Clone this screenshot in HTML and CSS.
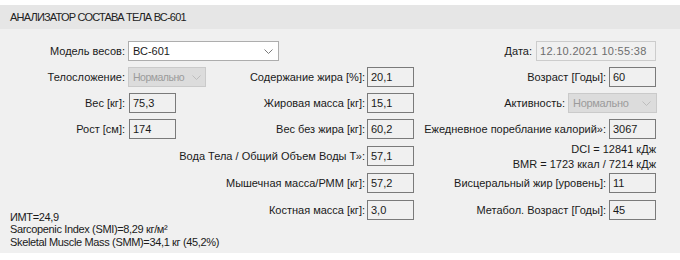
FILE: index.html
```html
<!DOCTYPE html>
<html lang="ru">
<head>
<meta charset="utf-8">
<link rel="stylesheet" href="styles.css">
</head>
<body>
<div class="window">
  <div class="title">АНАЛИЗАТОР СОСТАВА ТЕЛА ВС-601</div>
  <div class="panel">
    <div class="grid">
      <!-- column A -->
      <div class="cell a r1"><span class="lbl">Модель весов:</span><div class="select wide"><span class="val">ВС-601</span><svg class="chev" width="9" height="5" viewBox="0 0 9 5"><path d="M0.5 0.5 L4.5 4.5 L8.5 0.5" fill="none" stroke="#7a7a7a" stroke-width="1"/></svg></div></div>
      <div class="cell a r2"><span class="lbl">Телосложение:</span><div class="select dis body"><span class="val">Нормально</span><svg class="chev" width="9" height="5" viewBox="0 0 9 5"><path d="M0.5 0.5 L4.5 4.5 L8.5 0.5" fill="none" stroke="#bdbdbd" stroke-width="1"/></svg></div></div>
      <div class="cell a r3"><span class="lbl">Вес [кг]:</span><div class="inp">75,3</div></div>
      <div class="cell a r4"><span class="lbl">Рост [см]:</span><div class="inp">174</div></div>
      <div class="summary">
        <div>ИМТ=24,9</div>
        <div>Sarcopenic Index (SMI)=8,29 кг/м²</div>
        <div>Skeletal Muscle Mass (SMM)=34,1 кг (45,2%)</div>
      </div>

      <!-- column B -->
      <div class="cell b r2"><span>Содержание жира [%]:</span><div class="inp">20,1</div></div>
      <div class="cell b r3"><span>Жировая масса [кг]:</span><div class="inp">15,1</div></div>
      <div class="cell b r4"><span>Вес без жира [кг]:</span><div class="inp">60,2</div></div>
      <div class="cell b r5"><span>Вода Тела / Общий Объем Воды Т»:</span><div class="inp">57,1</div></div>
      <div class="cell b r6"><span>Мышечная масса/РММ [кг]:</span><div class="inp">57,2</div></div>
      <div class="cell b r7"><span>Костная масса [кг]:</span><div class="inp">3,0</div></div>

      <!-- column C -->
      <div class="cell c r1"><span class="date-lbl">Дата:</span><div class="inp date">12.10.2021 10:55:38</div></div>
      <div class="cell c r2"><span>Возраст [Годы]:</span><div class="inp">60</div></div>
      <div class="cell c r3"><span>Активность:</span><div class="select dis act"><span class="val">Нормально</span><svg class="chev" width="9" height="5" viewBox="0 0 9 5"><path d="M0.5 0.5 L4.5 4.5 L8.5 0.5" fill="none" stroke="#bdbdbd" stroke-width="1"/></svg></div></div>
      <div class="cell c r4"><span>Ежедневное пореблание калорий»:</span><div class="inp">3067</div></div>
      <div class="cell c r5 energy"><div>DCI = 12841 кДж</div><div>BMR = 1723 ккал / 7214 кДж</div></div>
      <div class="cell c r6"><span>Висцеральный жир [уровень]:</span><div class="inp">11</div></div>
      <div class="cell c r7"><span>Метабол. Возраст [Годы]:</span><div class="inp">45</div></div>
    </div>
  </div>
</div>
</body>
</html>
```

FILE: styles.css
```css
* { box-sizing: border-box; }
html, body { margin: 0; padding: 0; background: #ffffff; }
body {
  font-family: "Liberation Sans", Arial, sans-serif;
  font-size: 11px;
  color: #1a1a1a;
  width: 680px;
  height: 260px;
  overflow: hidden;
}
.window { padding-top: 5px; }
.title {
  height: 24px;
  line-height: 24px;
  padding-left: 10px;
  background: #e6e6e6;
  color: #222;
  letter-spacing: -0.8px;
}
.panel {
  background: #f0f0f0;
  padding: 9px 0 3px 0;
  height: 224px;
}
.grid {
  display: grid;
  grid-template-columns: 280px 140px 240px;
  grid-template-rows: 26px 26px 26px 26px 28px 26px 27px 27px;
}
.cell { display: flex; align-items: center; }
.a { grid-column: 1; }
.b { grid-column: 2; justify-content: flex-end; gap: 2px; padding-right: 6px; white-space: nowrap; }
.c { grid-column: 3; justify-content: flex-end; gap: 3px; padding-right: 4px; white-space: nowrap; }
.r1 { grid-row: 1; }
.r2 { grid-row: 2; }
.r3 { grid-row: 3; }
.r4 { grid-row: 4; }
.r5 { grid-row: 5; }
.r6 { grid-row: 6; }
.r7 { grid-row: 7; }
.b span, .c span { white-space: nowrap; }
.lbl { width: 128px; text-align: right; padding-right: 3px; flex: none; }
.inp {
  width: 47px;
  height: 20px;
  line-height: 18px;
  border: 1px solid #7a7a7a;
  background: #f0f0f0;
  padding-left: 3px;
  white-space: nowrap;
  flex: none;
}
.a .inp { margin-left: 1px; }
.inp.date {
  width: 120px;
  border-color: #cccccc;
  color: #6d6d6d;
  letter-spacing: 0.3px;
}
.date-lbl { margin-right: 1px; }
.select {
  height: 20px;
  display: flex;
  align-items: center;
  justify-content: space-between;
  padding: 0 5px 0 4px;
  border: 1px solid #adadad;
  background: #ffffff;
  flex: none;
  overflow: hidden;
  white-space: nowrap;
}
.select .chev { flex: none; }
.select .val { flex: none; }
.select.dis {
  background: #dcdcdc;
  border-color: #cacaca;
  color: #9b9b9b;
}
.select.dis .val { letter-spacing: -0.3px; }
.select.wide { width: 151px; }
.select.body { width: 78px; padding-left: 4px; padding-right: 4px; }
.select.body .val { font-size: 10.5px; letter-spacing: -0.5px; }
.select.act { width: 89px; margin-right: -1px; }
.chev { display: block; }
.energy {
  flex-direction: column;
  align-items: flex-end;
  justify-content: center;
  line-height: 12px;
  padding-top: 0;
}
.summary {
  grid-column: 1;
  grid-row: 6 / 9;
  align-self: end;
  padding-left: 10px;
  line-height: 12.5px;
  padding-bottom: 2px;
  letter-spacing: -0.35px;
  white-space: nowrap;
}
```
